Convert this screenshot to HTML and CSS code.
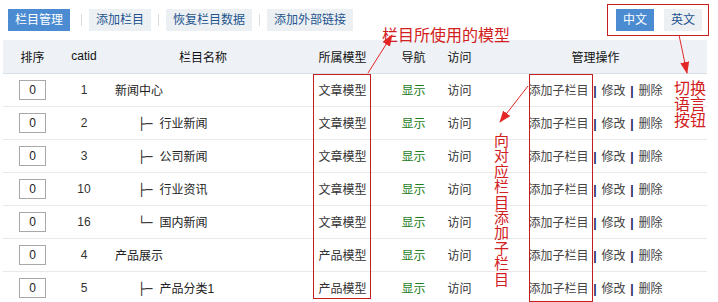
FILE: index.html
```html
<!DOCTYPE html>
<html lang="zh-CN">
<head>
  <meta charset="UTF-8">
  <title>栏目管理</title>
  <meta name="viewport" content="width=device-width, initial-scale=1.0">
  <link rel="stylesheet" href="styles.css">
</head>
<body>

  <div class="page">
    <div class="topbar">
      <div class="tabs">
        <a class="tab on first">栏目管理</a><span class="sep"></span>
        <a class="tab">添加栏目</a><span class="sep"></span>
        <a class="tab">恢复栏目数据</a><span class="sep"></span>
        <a class="tab">添加外部链接</a>
      </div>
      <div class="lang">
        <a class="tab on">中文</a>
        <a class="tab">英文</a>
      </div>
    </div>

    <table class="list">
      <colgroup>
        <col style="width:59px">
        <col style="width:44px">
        <col style="width:194px">
        <col style="width:85px">
        <col style="width:57px">
        <col style="width:35px">
        <col style="width:230px">
      </colgroup>
      <thead>
        <tr>
          <th>排序</th>
          <th>catid</th>
          <th>栏目名称</th>
          <th>所属模型</th>
          <th>导航</th>
          <th>访问</th>
          <th class="ops">管理操作</th>
        </tr>
      </thead>
      <tbody>
        <tr>
          <td><input class="order" type="text" value="0"></td>
          <td>1</td>
          <td class="name">新闻中心</td>
          <td>文章模型</td>
          <td class="show">显示</td>
          <td>访问</td>
          <td class="ops"><a>添加子栏目</a><span class="bar">|</span><a>修改</a><span class="bar">|</span><a>删除</a></td>
        </tr>
        <tr>
          <td><input class="order" type="text" value="0"></td>
          <td>2</td>
          <td class="name"><span class="tree">├─</span>行业新闻</td>
          <td>文章模型</td>
          <td class="show">显示</td>
          <td>访问</td>
          <td class="ops"><a>添加子栏目</a><span class="bar">|</span><a>修改</a><span class="bar">|</span><a>删除</a></td>
        </tr>
        <tr>
          <td><input class="order" type="text" value="0"></td>
          <td>3</td>
          <td class="name"><span class="tree">├─</span>公司新闻</td>
          <td>文章模型</td>
          <td class="show">显示</td>
          <td>访问</td>
          <td class="ops"><a>添加子栏目</a><span class="bar">|</span><a>修改</a><span class="bar">|</span><a>删除</a></td>
        </tr>
        <tr>
          <td><input class="order" type="text" value="0"></td>
          <td>10</td>
          <td class="name"><span class="tree">├─</span>行业资讯</td>
          <td>文章模型</td>
          <td class="show">显示</td>
          <td>访问</td>
          <td class="ops"><a>添加子栏目</a><span class="bar">|</span><a>修改</a><span class="bar">|</span><a>删除</a></td>
        </tr>
        <tr>
          <td><input class="order" type="text" value="0"></td>
          <td>16</td>
          <td class="name"><span class="tree">└─</span>国内新闻</td>
          <td>文章模型</td>
          <td class="show">显示</td>
          <td>访问</td>
          <td class="ops"><a>添加子栏目</a><span class="bar">|</span><a>修改</a><span class="bar">|</span><a>删除</a></td>
        </tr>
        <tr>
          <td><input class="order" type="text" value="0"></td>
          <td>4</td>
          <td class="name">产品展示</td>
          <td>产品模型</td>
          <td class="show">显示</td>
          <td>访问</td>
          <td class="ops"><a>添加子栏目</a><span class="bar">|</span><a>修改</a><span class="bar">|</span><a>删除</a></td>
        </tr>
        <tr>
          <td><input class="order" type="text" value="0"></td>
          <td>5</td>
          <td class="name"><span class="tree">├─</span>产品分类1</td>
          <td>产品模型</td>
          <td class="show">显示</td>
          <td>访问</td>
          <td class="ops"><a>添加子栏目</a><span class="bar">|</span><a>修改</a><span class="bar">|</span><a>删除</a></td>
        </tr>
      </tbody>
    </table>

    <!-- red notes drawn over the screenshot -->
    <div class="mark mark-model"></div>
    <div class="mark mark-ops"></div>
    <div class="mark mark-lang"></div>
    <div class="note note-model">栏目所使用的模型</div>
    <div class="note note-lang">切换语言按钮</div>
    <div class="note note-ops">向对应栏目添加子栏目</div>

    <svg class="arrows" width="718" height="302" viewBox="0 0 718 302">
      <defs>
        <marker id="head" markerWidth="12" markerHeight="9" refX="11" refY="4.5" orient="auto" markerUnits="userSpaceOnUse">
          <path d="M0,0 L12,4.5 L0,9 z" fill="#e42626"/>
        </marker>
      </defs>
      <line x1="368" y1="73" x2="392" y2="35" stroke="#e42626" stroke-width="1" marker-end="url(#head)"/>
      <line x1="528" y1="86" x2="500" y2="122" stroke="#e42626" stroke-width="1" marker-end="url(#head)"/>
      <line x1="679" y1="35" x2="687" y2="73" stroke="#e42626" stroke-width="1" marker-end="url(#head)"/>
    </svg>
  </div>

</body>
</html>
```

FILE: styles.css
```css
* { box-sizing: border-box; }

body {
  margin: 0;
  background-color: #fff;
  color: #333;
  font-family: "Liberation Sans", "Noto Sans CJK SC", sans-serif;
  font-size: 12px;
}

.page {
  position: relative;
  width: 718px;
  height: 302px;
  padding: 9px 11px 0 3px;
  overflow: hidden;
}

.topbar {
  display: flex;
  justify-content: space-between;
  align-items: center;
  padding: 0 5px;
  height: 22px;
}

.tabs, .lang {
  display: flex;
  align-items: center;
}

.lang {
  gap: 10px;
}

.tab {
  display: block;
  height: 22px;
  line-height: 22px;
  padding: 0 7px;
  background-color: #edf0f3;
  color: #23548f;
  cursor: pointer;
}

.tab.on {
  background-color: #4b8bd2;
  color: #fff;
}

.tab.first {
  margin-right: 4px;
}

.sep {
  display: block;
  width: 1px;
  height: 12px;
  margin: 0 7px;
  background-color: #dcdcdc;
}

.list {
  width: 704px;
  margin-top: 9px;
  border-collapse: collapse;
  table-layout: fixed;
}

.list th {
  height: 33px;
  padding: 0;
  background-color: #eef2f6;
  border-bottom: 1px solid #d9e1e8;
  color: #111;
  font-weight: normal;
  text-align: center;
}

.list td {
  height: 33px;
  padding: 0;
  border-bottom: 1px solid #e9e9e9;
  text-align: center;
  vertical-align: middle;
  white-space: nowrap;
}

.list .ops {
  padding-left: 7px;
}

.list td.name {
  text-align: left;
  padding-left: 9px;
  color: #222;
}

.tree {
  display: inline-block;
  margin-left: 23px;
  margin-right: 7px;
  font-family: "DejaVu Sans Mono", monospace;
  color: #222;
}

.order {
  display: block;
  width: 27px;
  height: 20px;
  margin: 0 auto;
  padding: 0;
  border: 1px solid #a8a8a8;
  font-family: "Liberation Sans", sans-serif;
  font-size: 12px;
  color: #222;
  text-align: center;
}

.show {
  color: #1d7d1d;
}

.ops a {
  color: #444;
  cursor: pointer;
}

.bar {
  display: inline-block;
  width: 13px;
  text-align: center;
  color: #24245e;
  font-weight: bold;
}

/* annotations */
.mark {
  position: absolute;
  border: 1px solid #c41e1e;
}

.mark-model {
  left: 313px;
  top: 74px;
  width: 58px;
  height: 225px;
}

.mark-ops {
  left: 529px;
  top: 74px;
  width: 64px;
  height: 228px;
}

.mark-lang {
  left: 607px;
  top: 4px;
  width: 102px;
  height: 32px;
}

.note {
  position: absolute;
  color: #d22020;
  font-family: "Noto Sans CJK SC", sans-serif;
}

.note-model {
  left: 382px;
  top: 26px;
  font-size: 16px;
  line-height: 16px;
}

.note-lang {
  left: 674px;
  top: 79px;
  width: 32px;
  font-size: 16px;
  line-height: 16px;
  word-break: break-all;
}

.note-ops {
  left: 494px;
  top: 132px;
  width: 15px;
  font-size: 15px;
  line-height: 15.4px;
  word-break: break-all;
}

.arrows {
  position: absolute;
  left: 0;
  top: 0;
  pointer-events: none;
}
```
